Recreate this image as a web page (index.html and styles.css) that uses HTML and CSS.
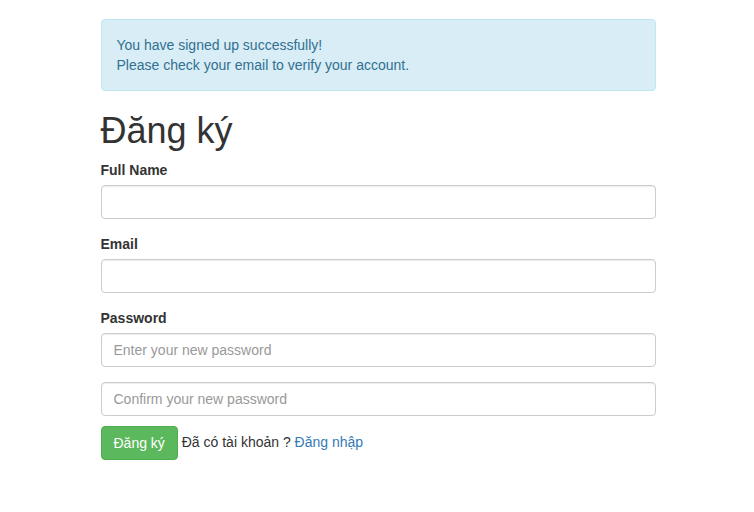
FILE: index.html
```html
<!DOCTYPE html>
<html lang="vi">
<head>
<meta charset="utf-8">
<meta name="viewport" content="width=device-width, initial-scale=1">
<title>Đăng ký</title>
<link rel="stylesheet" href="styles.css">
</head>
<body>
<main class="container">
  <div class="alert" role="status">
    You have signed up successfully!<br>
    Please check your email to verify your account.
  </div>
  <h1 class="title">Đăng ký</h1>
  <form>
    <div class="form-group">
      <label for="name">Full Name</label>
      <input class="form-control" type="text" id="name">
    </div>
    <div class="form-group">
      <label for="email">Email</label>
      <input class="form-control" type="email" id="email">
    </div>
    <div class="form-group">
      <label for="password">Password</label>
      <input class="form-control" type="password" id="password" placeholder="Enter your new password">
    </div>
    <input class="form-control" type="password" aria-label="Confirm password" placeholder="Confirm your new password">
    <div class="actions">
      <button class="btn" type="submit">Đăng ký</button>
      <span>Đã có tài khoản ? <a href="#">Đăng nhập</a></span>
    </div>
  </form>
</main>
</body>
</html>
```
FILE: styles.css
```css
* {
  box-sizing: border-box;
}

body {
  margin: 0;
  font-family: "Liberation Sans", Arial, sans-serif;
  font-size: 14px;
  line-height: 20px;
  color: #333;
  background: #fff;
}

.container {
  max-width: 585px;
  margin: 0 auto;
  padding: 19px 14px 20px 16px;
}

.alert {
  padding: 15px;
  margin-bottom: 20px;
  color: #31708f;
  background: #d9edf7;
  border: 1px solid #bce8f1;
  border-radius: 4px;
}

.title {
  margin: 0 0 10px;
  font-size: 36px;
  font-weight: 500;
  line-height: 39px;
}

.form-group {
  margin-bottom: 15px;
}

label {
  display: block;
  margin-bottom: 5px;
  font-weight: 700;
}

.form-control {
  display: block;
  width: 100%;
  height: 34px;
  padding: 6px 12px;
  font: inherit;
  color: #555;
  background: #fff;
  border: 1px solid #ccc;
  border-radius: 4px;
  box-shadow: inset 0 1px 1px rgba(0, 0, 0, 0.075);
}

.form-control::placeholder {
  color: #999;
  opacity: 1;
}

.actions {
  margin-top: 10px;
}

.btn {
  padding: 6px 12px;
  font: inherit;
  color: #fff;
  vertical-align: middle;
  background: #5cb85c;
  border: 1px solid #4cae4c;
  border-radius: 4px;
  cursor: pointer;
}

a {
  color: #337ab7;
  text-decoration: none;
}
```
